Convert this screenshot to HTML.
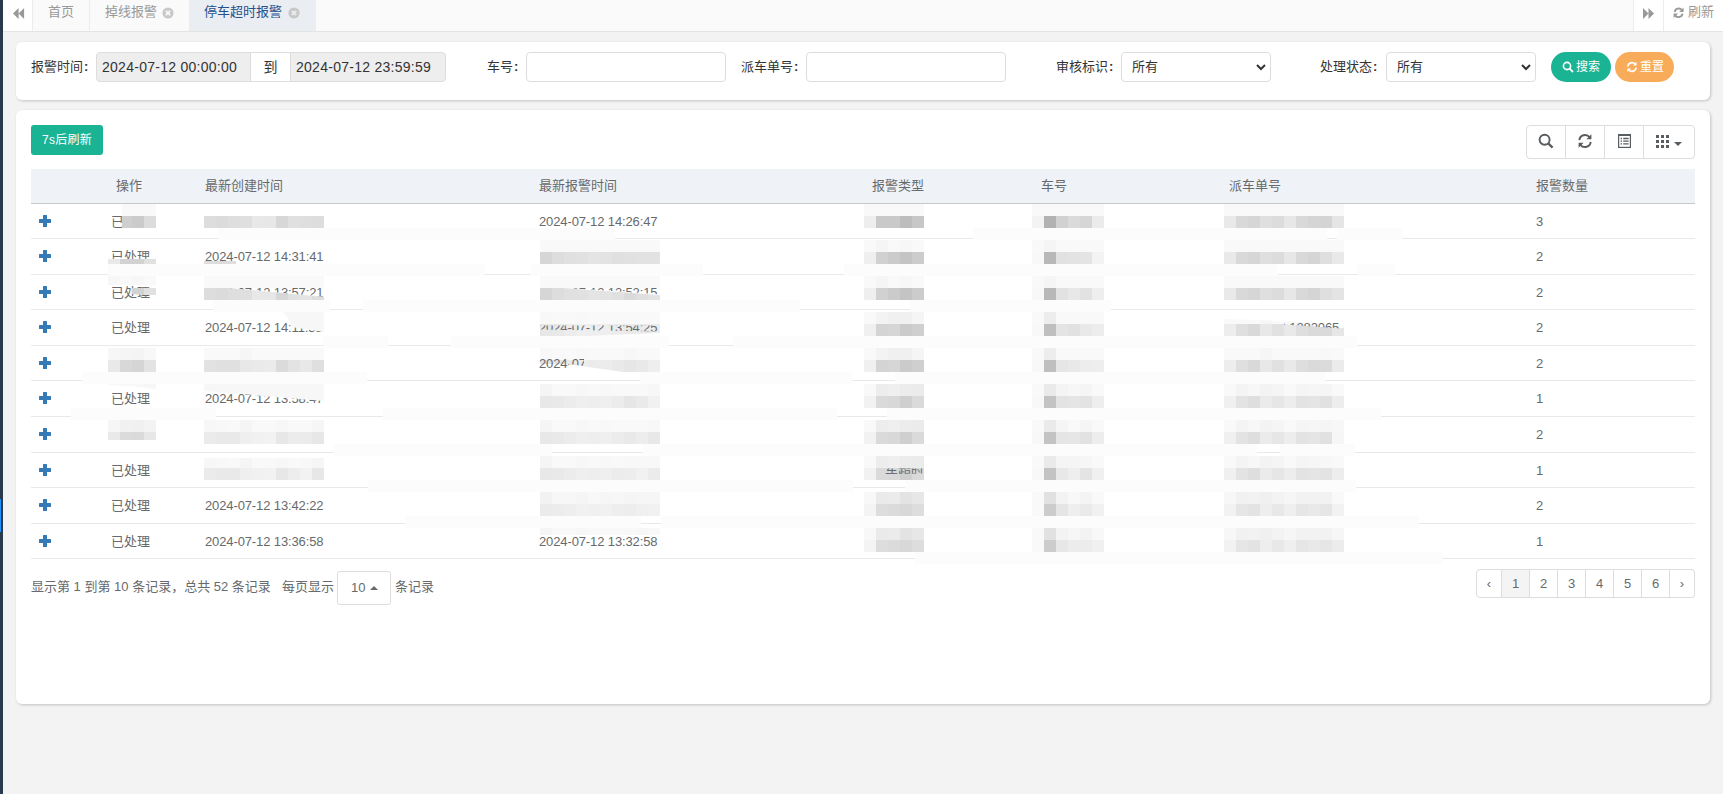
<!DOCTYPE html>
<html lang="zh-CN">
<head>
<meta charset="utf-8">
<title>停车超时报警</title>
<style>
*{box-sizing:border-box;}
html,body{margin:0;padding:0;}
body{width:1723px;height:794px;overflow:hidden;background:#f3f3f4;font-family:"Liberation Sans","Noto Sans CJK SC","WenQuanYi Zen Hei",sans-serif;font-size:13px;color:#676a6c;position:relative;}
.abs{position:absolute;}
#strip{left:0;top:0;width:3px;height:794px;background:#293a4b;}
#strip i{position:absolute;left:0;top:499px;width:1px;height:33px;background:#1e90ff;}
#tabs{left:3px;top:0;width:1720px;height:32px;background:#fafafa;border-bottom:1px solid #e4e4e4;}
#tabs .b{position:absolute;top:0;height:31px;line-height:24px;font-size:13px;color:#999;white-space:nowrap;}
#tabs .l{left:0;width:30px;background:#fff;border-right:1px solid #ececec;}
#tabs .t1{left:30px;width:57px;border-right:1px solid #ececec;text-align:center;}
#tabs .t2{left:87px;width:99px;padding-left:15px;}
#tabs .t3{left:186px;width:127px;padding-left:15px;background:#eaedf1;color:#23508e;}
#tabs .r1{left:1630px;width:30px;background:#fff;border-left:1px solid #ececec;}
#tabs .r2{left:1660px;width:60px;background:#fff;border-left:1px solid #ececec;padding-left:24px;}
.card{background:#fff;border-radius:6px;box-shadow:1px 1px 3px rgba(0,0,0,.2);}
#c1{left:16px;top:42px;width:1694px;height:58px;}
#c2{left:16px;top:110px;width:1694px;height:594px;}
.lab b{margin-left:1px;}
.cm{font-family:"Noto Sans CJK SC",sans-serif;}
.lab{position:absolute;top:52px;height:30px;line-height:29px;font-size:13px;color:#333;white-space:nowrap;}
.inp{position:absolute;top:52px;height:30px;border:1px solid #ddd;border-radius:4px;background:#fff;line-height:28px;font-size:14px;color:#333;white-space:nowrap;}
.dis{background:#eee;padding-left:5px;letter-spacing:.27px;}
.btn{position:absolute;top:52px;height:30px;border-radius:15px;color:#fff;font-size:12px;line-height:30px;white-space:nowrap;}
#th{left:31px;top:169px;width:1664px;height:35px;background:#eff3f8;border-bottom:1px solid #c8c8c8;}
.h{position:absolute;top:170px;height:33px;line-height:32px;font-size:13px;color:#676a6c;white-space:nowrap;}
.ln{position:absolute;height:1px;background:#e7eaec;}
.c{position:absolute;height:20px;line-height:20px;font-size:13px;color:#676a6c;white-space:nowrap;}
.plus{position:absolute;left:39px;width:12px;height:12px;}
.plus:before{content:"";position:absolute;left:0;top:4px;width:12px;height:4px;background:#337ab7;border-radius:.5px;}
.plus:after{content:"";position:absolute;left:4px;top:0;width:4px;height:12px;background:#337ab7;border-radius:.5px;}
.d{letter-spacing:-.12px;}
.sm{position:absolute;height:12px;background:#fcfcfc;}
.m{position:absolute;width:12px;height:12px;}
.tb{position:absolute;top:125px;height:34px;border:1px solid #ddd;background:#fff;border-left:0;}
.pg{position:absolute;top:569px;height:29px;border:1px solid #ddd;border-left:0;background:#fff;font-size:13px;line-height:27px;text-align:center;color:#676a6c;}
</style>
</head>
<body>
<div id="strip" class="abs"><i></i></div>
<div id="tabs" class="abs">
  <div class="b l"><svg width="30" height="31" viewBox="0 0 30 31"><path d="M10 13.5 L15.6 8 V19 Z M15.6 13.5 L21.1 8 V19 Z" fill="#999"/></svg></div>
  <div class="b t1">首页</div>
  <div class="b t2">掉线报警<svg class="abs" style="left:72px;top:7px" width="12" height="12" viewBox="0 0 12 12"><circle cx="6" cy="6" r="5.6" fill="#c8c8c8"/><path d="M3.8 3.8 L8.2 8.2 M8.2 3.8 L3.8 8.2" stroke="#fafafa" stroke-width="1.8"/></svg></div>
  <div class="b t3">停车超时报警<svg class="abs" style="left:99px;top:7px" width="12" height="12" viewBox="0 0 12 12"><circle cx="6" cy="6" r="5.6" fill="#c8c8c8"/><path d="M3.8 3.8 L8.2 8.2 M8.2 3.8 L3.8 8.2" stroke="#eaedf1" stroke-width="1.8"/></svg></div>
  <div class="b r1"><svg width="30" height="31" viewBox="0 0 30 31"><path d="M9 8 L14.5 13.5 L9 19 Z M14.5 8 L20 13.5 L14.5 19 Z" fill="#999"/></svg></div>
  <div class="b r2"><svg class="abs" style="left:8.7px;top:6.6px" width="11.2" height="11.6" viewBox="0 0 12 13"><path d="M1.6 5.6 A4.5 4.5 0 0 1 9.6 3.4 M10.4 7.4 A4.5 4.5 0 0 1 2.4 9.6" fill="none" stroke="#999" stroke-width="2.1"/><path d="M11.6 .6 V5.6 H6.6 Z M.4 12.4 V7.4 H5.4 Z" fill="#999"/></svg>刷新</div>
</div>
<div id="c1" class="abs card"></div>
<div id="c2" class="abs card"></div>
<div class="lab" style="left:31px">报警时间<b>:</b></div>
<div class="inp dis" style="left:96px;width:155px;border-radius:4px 0 0 4px">2024-07-12 00:00:00</div>
<div class="inp" style="left:250px;width:41px;border-radius:0;text-align:center">到</div>
<div class="inp dis" style="left:290px;width:156px;border-radius:0 4px 4px 0">2024-07-12 23:59:59</div>
<div class="lab" style="left:487px">车号<b>:</b></div>
<div class="inp" style="left:526px;width:200px"></div>
<div class="lab" style="left:741px">派车单号<b>:</b></div>
<div class="inp" style="left:806px;width:200px"></div>
<div class="lab" style="left:1056px">审核标识<b>:</b></div>
<div class="inp" style="left:1121px;width:150px;padding-left:10px;font-size:13px">所有<svg class="abs" style="right:4px;top:11px" width="10" height="7" viewBox="0 0 10 7"><path d="M1 1 L5 5 L9 1" fill="none" stroke="#333" stroke-width="2"/></svg></div>
<div class="lab" style="left:1320px">处理状态<b>:</b></div>
<div class="inp" style="left:1386px;width:150px;padding-left:10px;font-size:13px">所有<svg class="abs" style="right:4px;top:11px" width="10" height="7" viewBox="0 0 10 7"><path d="M1 1 L5 5 L9 1" fill="none" stroke="#333" stroke-width="2"/></svg></div>
<div class="btn" style="left:1551px;width:60px;background:#1ab394;padding-left:25px"><svg class="abs" style="left:11px;top:9px" width="12" height="12" viewBox="0 0 12 12"><circle cx="5" cy="5" r="3.6" fill="none" stroke="#fff" stroke-width="1.6"/><path d="M7.6 7.6 L11 11" stroke="#fff" stroke-width="1.8"/></svg>搜索</div>
<div class="btn" style="left:1615px;width:59px;background:#f8ac59;padding-left:25px"><svg class="abs" style="left:11px;top:9px" width="12" height="12" viewBox="0 0 13 13"><path d="M2 6 A4.5 4.5 0 0 1 10 3.5 M11 7 A4.5 4.5 0 0 1 3 9.5" fill="none" stroke="#fff" stroke-width="1.8"/><path d="M11.5 1 V5 H7.5 Z M1.5 12 V8 H5.5 Z" fill="#fff"/></svg>重置</div>
<div class="abs" style="left:31px;top:125px;width:72px;height:30px;background:#1ab394;border-radius:3px;color:#fff;font-size:12px;line-height:30px;text-align:center;letter-spacing:.3px">7s后刷新</div>
<div class="abs" style="left:1526px;top:125px;width:169px;height:34px;border:1px solid #ddd;border-radius:4px;background:#fff"></div>
<div class="abs" style="left:1565px;top:126px;width:1px;height:32px;background:#ddd"></div>
<div class="abs" style="left:1604px;top:126px;width:1px;height:32px;background:#ddd"></div>
<div class="abs" style="left:1643px;top:126px;width:1px;height:32px;background:#ddd"></div>
<svg class="abs" style="left:1537px;top:132px" width="18" height="18" viewBox="0 0 18 18"><circle cx="7.6" cy="7.7" r="5" fill="none" stroke="#5a5d5f" stroke-width="1.9"/><path d="M11.2 11.4 L15.6 15.6" stroke="#5a5d5f" stroke-width="2.3"/></svg>
<svg class="abs" style="left:1577px;top:133px" width="16" height="16" viewBox="0 0 16 16"><path d="M2.3 7.2 A5.8 5.8 0 0 1 12.6 4.2 M13.7 8.8 A5.8 5.8 0 0 1 3.4 11.8" fill="none" stroke="#5a5d5f" stroke-width="1.9"/><path d="M14.4 1.2 V6.2 H9.4 Z M1.6 14.8 V9.8 H6.6 Z" fill="#5a5d5f"/></svg>
<svg class="abs" style="left:1618px;top:134px" width="13" height="14" viewBox="0 0 13 14"><rect x=".6" y=".6" width="11.8" height="12.8" fill="none" stroke="#5a5d5f" stroke-width="1.2"/><path d="M0 1 H13" stroke="#5a5d5f" stroke-width="2"/><path d="M2.6 4.5 H4 M5.2 4.5 H10.6 M2.6 7.2 H4 M5.2 7.2 H10.6 M2.6 9.9 H4 M5.2 9.9 H10.6" stroke="#5a5d5f" stroke-width="1.3"/></svg>
<svg class="abs" style="left:1656px;top:135px" width="13" height="13" viewBox="0 0 13 13"><path d="M0 0h3v3H0z M5 0h3v3H5z M10 0h3v3h-3z M0 5h3v3H0z M5 5h3v3H5z M10 5h3v3h-3z M0 10h3v3H0z M5 10h3v3H5z M10 10h3v3h-3z" fill="#5a5d5f"/></svg>
<svg class="abs" style="left:1674px;top:142px" width="8" height="4" viewBox="0 0 8 4"><path d="M0 0H8L4 4Z" fill="#5a5d5f"/></svg>
<div id="th" class="abs"></div>
<div class="h" style="left:116px">操作</div>
<div class="h" style="left:205px">最新创建时间</div>
<div class="h" style="left:539px">最新报警时间</div>
<div class="h" style="left:872px">报警类型</div>
<div class="h" style="left:1041px">车号</div>
<div class="h" style="left:1229px">派车单号</div>
<div class="h" style="left:1536px">报警数量</div>
<div class="ln" style="left:31px;top:238px;width:187px"></div>
<div class="ln" style="left:615px;top:238px;width:358px"></div>
<div class="ln" style="left:1327px;top:238px;width:10px"></div>
<div class="ln" style="left:1402px;top:238px;width:293px"></div>
<div class="sm" style="left:218px;top:228px;width:397px"></div>
<div class="sm" style="left:973px;top:228px;width:354px"></div>
<div class="sm" style="left:1337px;top:228px;width:65px"></div>
<div class="ln" style="left:31px;top:274px;width:77px"></div>
<div class="ln" style="left:485px;top:274px;width:45px"></div>
<div class="ln" style="left:703px;top:274px;width:141px"></div>
<div class="ln" style="left:1278px;top:274px;width:80px"></div>
<div class="ln" style="left:1395px;top:274px;width:300px"></div>
<div class="sm" style="left:108px;top:264px;width:377px"></div>
<div class="sm" style="left:530px;top:264px;width:173px"></div>
<div class="sm" style="left:844px;top:264px;width:434px"></div>
<div class="sm" style="left:1358px;top:264px;width:37px"></div>
<div class="ln" style="left:31px;top:309px;width:182px"></div>
<div class="ln" style="left:330px;top:309px;width:33px"></div>
<div class="ln" style="left:800px;top:309px;width:110px"></div>
<div class="ln" style="left:1111px;top:309px;width:584px"></div>
<div class="sm" style="left:213px;top:300px;width:117px"></div>
<div class="sm" style="left:363px;top:300px;width:437px"></div>
<div class="sm" style="left:910px;top:300px;width:201px"></div>
<div class="ln" style="left:31px;top:345px;width:292px"></div>
<div class="ln" style="left:388px;top:345px;width:62px"></div>
<div class="ln" style="left:669px;top:345px;width:65px"></div>
<div class="ln" style="left:1358px;top:345px;width:337px"></div>
<div class="sm" style="left:323px;top:336px;width:65px"></div>
<div class="sm" style="left:450px;top:336px;width:219px"></div>
<div class="sm" style="left:734px;top:336px;width:624px"></div>
<div class="ln" style="left:31px;top:380px;width:51px"></div>
<div class="ln" style="left:367px;top:380px;width:273px"></div>
<div class="ln" style="left:852px;top:380px;width:43px"></div>
<div class="ln" style="left:1325px;top:380px;width:370px"></div>
<div class="sm" style="left:82px;top:372px;width:285px"></div>
<div class="sm" style="left:640px;top:372px;width:212px"></div>
<div class="sm" style="left:895px;top:372px;width:430px"></div>
<div class="ln" style="left:31px;top:416px;width:40px"></div>
<div class="ln" style="left:216px;top:416px;width:167px"></div>
<div class="ln" style="left:837px;top:416px;width:50px"></div>
<div class="ln" style="left:1381px;top:416px;width:314px"></div>
<div class="sm" style="left:71px;top:408px;width:145px"></div>
<div class="sm" style="left:383px;top:408px;width:454px"></div>
<div class="sm" style="left:887px;top:408px;width:494px"></div>
<div class="ln" style="left:31px;top:452px;width:303px"></div>
<div class="ln" style="left:552px;top:452px;width:91px"></div>
<div class="ln" style="left:1257px;top:452px;width:23px"></div>
<div class="ln" style="left:1355px;top:452px;width:340px"></div>
<div class="sm" style="left:334px;top:444px;width:218px"></div>
<div class="sm" style="left:643px;top:444px;width:614px"></div>
<div class="sm" style="left:1280px;top:444px;width:75px"></div>
<div class="ln" style="left:31px;top:487px;width:337px"></div>
<div class="ln" style="left:853px;top:487px;width:52px"></div>
<div class="ln" style="left:1356px;top:487px;width:339px"></div>
<div class="sm" style="left:368px;top:480px;width:485px"></div>
<div class="sm" style="left:905px;top:480px;width:451px"></div>
<div class="ln" style="left:31px;top:523px;width:374px"></div>
<div class="ln" style="left:641px;top:523px;width:20px"></div>
<div class="ln" style="left:1419px;top:523px;width:276px"></div>
<div class="sm" style="left:405px;top:516px;width:236px"></div>
<div class="sm" style="left:661px;top:516px;width:758px"></div>
<div class="ln" style="left:31px;top:558px;width:884px"></div>
<div class="ln" style="left:1442px;top:558px;width:253px"></div>
<div class="sm" style="left:915px;top:552px;width:527px"></div>
<div class="plus" style="top:215px"></div>
<div class="c d" style="left:1536px;top:212px">3</div>
<div class="plus" style="top:250px"></div>
<div class="c d" style="left:1536px;top:247px">2</div>
<div class="plus" style="top:286px"></div>
<div class="c d" style="left:1536px;top:283px">2</div>
<div class="plus" style="top:321px"></div>
<div class="c d" style="left:1536px;top:318px">2</div>
<div class="plus" style="top:357px"></div>
<div class="c d" style="left:1536px;top:354px">2</div>
<div class="plus" style="top:392px"></div>
<div class="c d" style="left:1536px;top:389px">1</div>
<div class="plus" style="top:428px"></div>
<div class="c d" style="left:1536px;top:425px">2</div>
<div class="plus" style="top:464px"></div>
<div class="c d" style="left:1536px;top:461px">1</div>
<div class="plus" style="top:499px"></div>
<div class="c d" style="left:1536px;top:496px">2</div>
<div class="plus" style="top:535px"></div>
<div class="c d" style="left:1536px;top:532px">1</div>
<div class="c" style="left:111px;top:247px">已处理</div>
<div class="c" style="left:111px;top:318px">已处理</div>
<div class="c" style="left:111px;top:389px">已处理</div>
<div class="c" style="left:111px;top:461px">已处理</div>
<div class="c" style="left:111px;top:496px">已处理</div>
<div class="c" style="left:111px;top:532px">已处理</div>
<div class="c" style="left:111px;top:212px">已</div>
<div class="c" style="left:111px;top:283px">已处理</div>
<div class="c d" style="left:205px;top:247px">2024-07-12 14:31:41</div>
<div class="c d" style="left:205px;top:318px">2024-07-12 14:11:35</div>
<div class="c d" style="left:205px;top:389px">2024-07-12 13:58:47</div>
<div class="c d" style="left:205px;top:496px">2024-07-12 13:42:22</div>
<div class="c d" style="left:205px;top:532px">2024-07-12 13:36:58</div>
<div class="c d" style="left:539px;top:212px">2024-07-12 14:26:47</div>
<div class="c d" style="left:539px;top:532px">2024-07-12 13:32:58</div>
<div class="m" style="left:864px;top:204px;width:60px;height:12px;background:linear-gradient(90deg,#f9f9f9 0px 12px,#f9f9f9 12px 24px,#f9f9f9 24px 36px,#f9f9f9 36px 48px,#f9f9f9 48px 60px)"></div>
<div class="m" style="left:864px;top:216px;width:60px;height:12px;background:linear-gradient(90deg,#eeeeee 0px 12px,#c9c9c9 12px 24px,#c9c9c9 24px 36px,#bdbdbd 36px 48px,#c7c7c7 48px 60px)"></div>
<div class="m" style="left:1032px;top:204px;width:72px;height:12px;background:linear-gradient(90deg,#f9f9f9 0px 12px,#f9f9f9 12px 24px,#f9f9f9 24px 36px,#f9f9f9 36px 48px,#f9f9f9 48px 60px,#f9f9f9 60px 72px)"></div>
<div class="m" style="left:1032px;top:216px;width:72px;height:12px;background:linear-gradient(90deg,#f3f3f3 0px 12px,#b2b2b2 12px 24px,#d1d1d1 24px 36px,#dadada 36px 48px,#d6d6d6 48px 60px,#ebebeb 60px 72px)"></div>
<div class="m" style="left:1224px;top:204px;width:120px;height:12px;background:linear-gradient(90deg,#f9f9f9 0px 12px,#f9f9f9 12px 24px,#f9f9f9 24px 36px,#f9f9f9 36px 48px,#f9f9f9 48px 60px,#f9f9f9 60px 72px,#f9f9f9 72px 84px,#f9f9f9 84px 96px,#f9f9f9 96px 108px,#f9f9f9 108px 120px)"></div>
<div class="m" style="left:1224px;top:216px;width:120px;height:12px;background:linear-gradient(90deg,#e9e9e9 0px 12px,#d9d9d9 12px 24px,#d6d6d6 24px 36px,#dfdfdf 36px 48px,#dcdcdc 48px 60px,#e7e7e7 60px 72px,#d9d9d9 72px 84px,#d5d5d5 84px 96px,#d4d4d4 96px 108px,#e5e5e5 108px 120px)"></div>
<div class="m" style="left:864px;top:240px;width:60px;height:12px;background:linear-gradient(90deg,#f9f9f9 0px 12px,#f5f5f5 12px 24px,#f9f9f9 24px 36px,#f7f7f7 36px 48px,#f9f9f9 48px 60px)"></div>
<div class="m" style="left:864px;top:252px;width:60px;height:12px;background:linear-gradient(90deg,#efefef 0px 12px,#d1d1d1 12px 24px,#cbcbcb 24px 36px,#c4c4c4 36px 48px,#cccccc 48px 60px)"></div>
<div class="m" style="left:1032px;top:240px;width:72px;height:12px;background:linear-gradient(90deg,#f9f9f9 0px 12px,#f5f5f5 12px 24px,#f9f9f9 24px 36px,#f9f9f9 36px 48px,#f9f9f9 48px 60px,#f9f9f9 60px 72px)"></div>
<div class="m" style="left:1032px;top:252px;width:72px;height:12px;background:linear-gradient(90deg,#f8f8f8 0px 12px,#b8b8b8 12px 24px,#e1e1e1 24px 36px,#e3e3e3 36px 48px,#e4e4e4 48px 60px,#f3f3f3 60px 72px)"></div>
<div class="m" style="left:1224px;top:240px;width:120px;height:12px;background:linear-gradient(90deg,#f9f9f9 0px 12px,#f9f9f9 12px 24px,#f9f9f9 24px 36px,#f9f9f9 36px 48px,#f9f9f9 48px 60px,#f9f9f9 60px 72px,#f9f9f9 72px 84px,#f9f9f9 84px 96px,#f9f9f9 96px 108px,#f9f9f9 108px 120px)"></div>
<div class="m" style="left:1224px;top:252px;width:120px;height:12px;background:linear-gradient(90deg,#e9e9e9 0px 12px,#d9d9d9 12px 24px,#d6d6d6 24px 36px,#dfdfdf 36px 48px,#dcdcdc 48px 60px,#e7e7e7 60px 72px,#d9d9d9 72px 84px,#d5d5d5 84px 96px,#dfdfdf 96px 108px,#e9e9e9 108px 120px)"></div>
<div class="m" style="left:864px;top:276px;width:60px;height:12px;background:linear-gradient(90deg,#f9f9f9 0px 12px,#f5f5f5 12px 24px,#f9f9f9 24px 36px,#f7f7f7 36px 48px,#f9f9f9 48px 60px)"></div>
<div class="m" style="left:864px;top:288px;width:60px;height:12px;background:linear-gradient(90deg,#efefef 0px 12px,#d1d1d1 12px 24px,#cbcbcb 24px 36px,#c4c4c4 36px 48px,#cccccc 48px 60px)"></div>
<div class="m" style="left:1032px;top:276px;width:72px;height:12px;background:linear-gradient(90deg,#f9f9f9 0px 12px,#f5f5f5 12px 24px,#f9f9f9 24px 36px,#f9f9f9 36px 48px,#f9f9f9 48px 60px,#f9f9f9 60px 72px)"></div>
<div class="m" style="left:1032px;top:288px;width:72px;height:12px;background:linear-gradient(90deg,#f8f8f8 0px 12px,#b8b8b8 12px 24px,#e2e2e2 24px 36px,#e8e8e8 36px 48px,#e2e2e2 48px 60px,#eeeeee 60px 72px)"></div>
<div class="m" style="left:1224px;top:276px;width:120px;height:12px;background:linear-gradient(90deg,#f9f9f9 0px 12px,#f9f9f9 12px 24px,#f9f9f9 24px 36px,#f9f9f9 36px 48px,#f9f9f9 48px 60px,#f9f9f9 60px 72px,#f9f9f9 72px 84px,#f9f9f9 84px 96px,#f9f9f9 96px 108px,#f9f9f9 108px 120px)"></div>
<div class="m" style="left:1224px;top:288px;width:120px;height:12px;background:linear-gradient(90deg,#e9e9e9 0px 12px,#d9d9d9 12px 24px,#d6d6d6 24px 36px,#dfdfdf 36px 48px,#dcdcdc 48px 60px,#e7e7e7 60px 72px,#d9d9d9 72px 84px,#d5d5d5 84px 96px,#dfdfdf 96px 108px,#e4e4e4 108px 120px)"></div>
<div class="m" style="left:864px;top:312px;width:60px;height:12px;background:linear-gradient(90deg,#f9f9f9 0px 12px,#f3f3f3 12px 24px,#f0f0f0 24px 36px,#f0f0f0 36px 48px,#f5f5f5 48px 60px)"></div>
<div class="m" style="left:864px;top:324px;width:60px;height:12px;background:linear-gradient(90deg,#f0f0f0 0px 12px,#d4d4d4 12px 24px,#d6d6d6 24px 36px,#cbcbcb 36px 48px,#cfcfcf 48px 60px)"></div>
<div class="m" style="left:1032px;top:312px;width:72px;height:12px;background:linear-gradient(90deg,#f9f9f9 0px 12px,#ededed 12px 24px,#f9f9f9 24px 36px,#f9f9f9 36px 48px,#f9f9f9 48px 60px,#f9f9f9 60px 72px)"></div>
<div class="m" style="left:1032px;top:324px;width:72px;height:12px;background:linear-gradient(90deg,#f8f8f8 0px 12px,#bfbfbf 12px 24px,#e4e4e4 24px 36px,#e1e1e1 36px 48px,#e9e9e9 48px 60px,#ededed 60px 72px)"></div>
<div class="m" style="left:1224px;top:319px;width:120px;height:5px;background:linear-gradient(90deg,#f9f9f9 0px 12px,#f9f9f9 12px 24px,#f9f9f9 24px 36px,#f6f6f6 36px 48px,#f9f9f9 48px 60px,#f9f9f9 60px 72px,#f9f9f9 72px 84px,#f9f9f9 84px 96px,#f9f9f9 96px 108px,#f9f9f9 108px 120px);clip-path:polygon(0.0px 0.0px,66.0px 2.0px,120.0px 5.0px,0.0px 5.0px)"></div>
<div class="m" style="left:1224px;top:324px;width:120px;height:12px;background:linear-gradient(90deg,#ededed 0px 12px,#dfdfdf 12px 24px,#d9d9d9 24px 36px,#e8e8e8 36px 48px,#e1e1e1 48px 60px,#e9e9e9 60px 72px,#dedede 72px 84px,#dadada 84px 96px,#dadada 96px 108px,#e6e6e6 108px 120px);clip-path:polygon(0.0px 0.0px,60.0px 0.0px,112.0px 4.0px,120.0px 4.0px,120.0px 12.0px,0.0px 12.0px)"></div>
<div class="m" style="left:864px;top:348px;width:60px;height:12px;background:linear-gradient(90deg,#f9f9f9 0px 12px,#f3f3f3 12px 24px,#f0f0f0 24px 36px,#f0f0f0 36px 48px,#f5f5f5 48px 60px)"></div>
<div class="m" style="left:864px;top:360px;width:60px;height:12px;background:linear-gradient(90deg,#f0f0f0 0px 12px,#d4d4d4 12px 24px,#d6d6d6 24px 36px,#cbcbcb 36px 48px,#cfcfcf 48px 60px)"></div>
<div class="m" style="left:1032px;top:348px;width:72px;height:12px;background:linear-gradient(90deg,#f9f9f9 0px 12px,#ededed 12px 24px,#f9f9f9 24px 36px,#f9f9f9 36px 48px,#f9f9f9 48px 60px,#f9f9f9 60px 72px)"></div>
<div class="m" style="left:1032px;top:360px;width:72px;height:12px;background:linear-gradient(90deg,#f8f8f8 0px 12px,#bfbfbf 12px 24px,#e6e6e6 24px 36px,#e9e9e9 36px 48px,#ededed 48px 60px,#eeeeee 60px 72px)"></div>
<div class="m" style="left:1224px;top:348px;width:120px;height:12px;background:linear-gradient(90deg,#f9f9f9 0px 12px,#f9f9f9 12px 24px,#f9f9f9 24px 36px,#f6f6f6 36px 48px,#f9f9f9 48px 60px,#f9f9f9 60px 72px,#f9f9f9 72px 84px,#f9f9f9 84px 96px,#f8f8f8 96px 108px,#f9f9f9 108px 120px)"></div>
<div class="m" style="left:1224px;top:360px;width:120px;height:12px;background:linear-gradient(90deg,#ededed 0px 12px,#dfdfdf 12px 24px,#d9d9d9 24px 36px,#e8e8e8 36px 48px,#e1e1e1 48px 60px,#e9e9e9 60px 72px,#dedede 72px 84px,#dadada 84px 96px,#dbdbdb 96px 108px,#ebebeb 108px 120px)"></div>
<div class="m" style="left:864px;top:384px;width:60px;height:12px;background:linear-gradient(90deg,#f9f9f9 0px 12px,#ededed 12px 24px,#efefef 24px 36px,#ececec 36px 48px,#ebebeb 48px 60px)"></div>
<div class="m" style="left:864px;top:396px;width:60px;height:12px;background:linear-gradient(90deg,#f2f2f2 0px 12px,#dadada 12px 24px,#d8d8d8 24px 36px,#cfcfcf 36px 48px,#dadada 48px 60px)"></div>
<div class="m" style="left:1032px;top:384px;width:72px;height:12px;background:linear-gradient(90deg,#f9f9f9 0px 12px,#eaeaea 12px 24px,#f4f4f4 24px 36px,#f7f7f7 36px 48px,#f5f5f5 48px 60px,#f9f9f9 60px 72px)"></div>
<div class="m" style="left:1032px;top:396px;width:72px;height:12px;background:linear-gradient(90deg,#f8f8f8 0px 12px,#c3c3c3 12px 24px,#e3e3e3 24px 36px,#e5e5e5 36px 48px,#e3e3e3 48px 60px,#eeeeee 60px 72px)"></div>
<div class="m" style="left:1224px;top:384px;width:120px;height:12px;background:linear-gradient(90deg,#f9f9f9 0px 12px,#f4f4f4 12px 24px,#f7f7f7 24px 36px,#f3f3f3 36px 48px,#f5f5f5 48px 60px,#f9f9f9 60px 72px,#f5f5f5 72px 84px,#f6f6f6 84px 96px,#f5f5f5 96px 108px,#f9f9f9 108px 120px)"></div>
<div class="m" style="left:1224px;top:396px;width:120px;height:12px;background:linear-gradient(90deg,#f0f0f0 0px 12px,#e3e3e3 12px 24px,#dedede 24px 36px,#ebebeb 36px 48px,#e6e6e6 48px 60px,#ededed 60px 72px,#e3e3e3 72px 84px,#e5e5e5 84px 96px,#e1e1e1 96px 108px,#ededed 108px 120px)"></div>
<div class="m" style="left:864px;top:420px;width:60px;height:12px;background:linear-gradient(90deg,#f9f9f9 0px 12px,#ededed 12px 24px,#efefef 24px 36px,#ececec 36px 48px,#ebebeb 48px 60px)"></div>
<div class="m" style="left:864px;top:432px;width:60px;height:12px;background:linear-gradient(90deg,#f2f2f2 0px 12px,#dadada 12px 24px,#d8d8d8 24px 36px,#cfcfcf 36px 48px,#dadada 48px 60px)"></div>
<div class="m" style="left:1032px;top:420px;width:72px;height:12px;background:linear-gradient(90deg,#f9f9f9 0px 12px,#eaeaea 12px 24px,#f5f5f5 24px 36px,#f9f9f9 36px 48px,#f5f5f5 48px 60px,#f9f9f9 60px 72px)"></div>
<div class="m" style="left:1032px;top:432px;width:72px;height:12px;background:linear-gradient(90deg,#f8f8f8 0px 12px,#c3c3c3 12px 24px,#e5e5e5 24px 36px,#e6e6e6 36px 48px,#e2e2e2 48px 60px,#ededed 60px 72px)"></div>
<div class="m" style="left:1224px;top:420px;width:120px;height:12px;background:linear-gradient(90deg,#f9f9f9 0px 12px,#f4f4f4 12px 24px,#f7f7f7 24px 36px,#f3f3f3 36px 48px,#f5f5f5 48px 60px,#f9f9f9 60px 72px,#f5f5f5 72px 84px,#f6f6f6 84px 96px,#f5f5f5 96px 108px,#f7f7f7 108px 120px)"></div>
<div class="m" style="left:1224px;top:432px;width:120px;height:12px;background:linear-gradient(90deg,#f0f0f0 0px 12px,#e3e3e3 12px 24px,#dedede 24px 36px,#ebebeb 36px 48px,#e6e6e6 48px 60px,#ededed 60px 72px,#e3e3e3 72px 84px,#e5e5e5 84px 96px,#e1e1e1 96px 108px,#f6f6f6 108px 120px)"></div>
<div class="m" style="left:864px;top:456px;width:60px;height:12px;background:linear-gradient(90deg,#f9f9f9 0px 12px,#ededed 12px 24px,#efefef 24px 36px,#ececec 36px 48px,#ebebeb 48px 60px)"></div>
<div class="m" style="left:864px;top:468px;width:60px;height:12px;background:linear-gradient(90deg,#f2f2f2 0px 12px,#dadada 12px 24px,#d8d8d8 24px 36px,#cfcfcf 36px 48px,#dadada 48px 60px)"></div>
<div class="m" style="left:1032px;top:456px;width:72px;height:12px;background:linear-gradient(90deg,#f9f9f9 0px 12px,#eaeaea 12px 24px,#f5f5f5 24px 36px,#f5f5f5 36px 48px,#f6f6f6 48px 60px,#f9f9f9 60px 72px)"></div>
<div class="m" style="left:1032px;top:468px;width:72px;height:12px;background:linear-gradient(90deg,#f8f8f8 0px 12px,#c3c3c3 12px 24px,#e8e8e8 24px 36px,#eeeeee 36px 48px,#e4e4e4 48px 60px,#f0f0f0 60px 72px)"></div>
<div class="m" style="left:1224px;top:456px;width:120px;height:12px;background:linear-gradient(90deg,#f9f9f9 0px 12px,#f4f4f4 12px 24px,#f7f7f7 24px 36px,#f3f3f3 36px 48px,#f5f5f5 48px 60px,#f9f9f9 60px 72px,#f5f5f5 72px 84px,#f6f6f6 84px 96px,#f7f7f7 96px 108px,#f9f9f9 108px 120px)"></div>
<div class="m" style="left:1224px;top:468px;width:120px;height:12px;background:linear-gradient(90deg,#f0f0f0 0px 12px,#e3e3e3 12px 24px,#dedede 24px 36px,#ebebeb 36px 48px,#e6e6e6 48px 60px,#ededed 60px 72px,#e3e3e3 72px 84px,#e5e5e5 84px 96px,#e3e3e3 96px 108px,#ededed 108px 120px)"></div>
<div class="m" style="left:864px;top:492px;width:60px;height:12px;background:linear-gradient(90deg,#f8f8f8 0px 12px,#eaeaea 12px 24px,#ebebeb 24px 36px,#e3e3e3 36px 48px,#e7e7e7 48px 60px)"></div>
<div class="m" style="left:864px;top:504px;width:60px;height:12px;background:linear-gradient(90deg,#f4f4f4 0px 12px,#dddddd 12px 24px,#dbdbdb 24px 36px,#d8d8d8 36px 48px,#dddddd 48px 60px)"></div>
<div class="m" style="left:1032px;top:492px;width:72px;height:12px;background:linear-gradient(90deg,#f9f9f9 0px 12px,#e1e1e1 12px 24px,#f3f3f3 24px 36px,#f8f8f8 36px 48px,#f4f4f4 48px 60px,#f9f9f9 60px 72px)"></div>
<div class="m" style="left:1032px;top:504px;width:72px;height:12px;background:linear-gradient(90deg,#f9f9f9 0px 12px,#cccccc 12px 24px,#e5e5e5 24px 36px,#eeeeee 36px 48px,#eaeaea 48px 60px,#f1f1f1 60px 72px)"></div>
<div class="m" style="left:1224px;top:492px;width:120px;height:12px;background:linear-gradient(90deg,#f7f7f7 0px 12px,#f1f1f1 12px 24px,#f2f2f2 24px 36px,#f0f0f0 36px 48px,#f3f3f3 48px 60px,#f6f6f6 60px 72px,#f2f2f2 72px 84px,#f2f2f2 84px 96px,#f2f2f2 96px 108px,#f9f9f9 108px 120px)"></div>
<div class="m" style="left:1224px;top:504px;width:120px;height:12px;background:linear-gradient(90deg,#f2f2f2 0px 12px,#e6e6e6 12px 24px,#e3e3e3 24px 36px,#eeeeee 36px 48px,#e8e8e8 48px 60px,#efefef 60px 72px,#e6e6e6 72px 84px,#e9e9e9 84px 96px,#e6e6e6 96px 108px,#f2f2f2 108px 120px)"></div>
<div class="m" style="left:864px;top:528px;width:60px;height:12px;background:linear-gradient(90deg,#f8f8f8 0px 12px,#eaeaea 12px 24px,#ebebeb 24px 36px,#e3e3e3 36px 48px,#e7e7e7 48px 60px)"></div>
<div class="m" style="left:864px;top:540px;width:60px;height:12px;background:linear-gradient(90deg,#f4f4f4 0px 12px,#dddddd 12px 24px,#dbdbdb 24px 36px,#d8d8d8 36px 48px,#dddddd 48px 60px)"></div>
<div class="m" style="left:1032px;top:528px;width:72px;height:12px;background:linear-gradient(90deg,#f9f9f9 0px 12px,#e1e1e1 12px 24px,#f3f3f3 24px 36px,#f6f6f6 36px 48px,#f3f3f3 48px 60px,#f8f8f8 60px 72px)"></div>
<div class="m" style="left:1032px;top:540px;width:72px;height:12px;background:linear-gradient(90deg,#f9f9f9 0px 12px,#cccccc 12px 24px,#e7e7e7 24px 36px,#ececec 36px 48px,#ececec 48px 60px,#f0f0f0 60px 72px)"></div>
<div class="m" style="left:1224px;top:528px;width:120px;height:12px;background:linear-gradient(90deg,#f7f7f7 0px 12px,#f1f1f1 12px 24px,#f2f2f2 24px 36px,#f0f0f0 36px 48px,#f3f3f3 48px 60px,#f6f6f6 60px 72px,#f2f2f2 72px 84px,#f2f2f2 84px 96px,#f2f2f2 96px 108px,#f6f6f6 108px 120px)"></div>
<div class="m" style="left:1224px;top:540px;width:120px;height:12px;background:linear-gradient(90deg,#f2f2f2 0px 12px,#e6e6e6 12px 24px,#e3e3e3 24px 36px,#eeeeee 36px 48px,#e8e8e8 48px 60px,#efefef 60px 72px,#e6e6e6 72px 84px,#e9e9e9 84px 96px,#e6e6e6 96px 108px,#ececec 108px 120px)"></div>
<div class="m" style="left:540px;top:240px;width:120px;height:12px;background:linear-gradient(90deg,#f9f9f9 0px 12px,#f9f9f9 12px 24px,#f9f9f9 24px 36px,#f9f9f9 36px 48px,#f9f9f9 48px 60px,#f9f9f9 60px 72px,#f9f9f9 72px 84px,#f9f9f9 84px 96px,#f9f9f9 96px 108px,#f9f9f9 108px 120px)"></div>
<div class="m" style="left:540px;top:252px;width:120px;height:12px;background:linear-gradient(90deg,#d6d6d6 0px 12px,#dddddd 12px 24px,#e0e0e0 24px 36px,#e1e1e1 36px 48px,#e4e4e4 48px 60px,#e3e3e3 60px 72px,#e0e0e0 72px 84px,#e1e1e1 84px 96px,#e2e2e2 96px 108px,#e2e2e2 108px 120px)"></div>
<div class="m" style="left:540px;top:384px;width:120px;height:12px;background:linear-gradient(90deg,#f5f5f5 0px 12px,#f9f9f9 12px 24px,#f9f9f9 24px 36px,#f7f7f7 36px 48px,#f9f9f9 48px 60px,#f8f8f8 60px 72px,#f9f9f9 72px 84px,#f9f9f9 84px 96px,#f9f9f9 96px 108px,#f7f7f7 108px 120px)"></div>
<div class="m" style="left:540px;top:396px;width:120px;height:12px;background:linear-gradient(90deg,#e8e8e8 0px 12px,#e9e9e9 12px 24px,#ececec 24px 36px,#efefef 36px 48px,#eeeeee 48px 60px,#efefef 60px 72px,#ececec 72px 84px,#e6e6e6 84px 96px,#eaeaea 96px 108px,#f1f1f1 108px 120px)"></div>
<div class="m" style="left:540px;top:420px;width:120px;height:12px;background:linear-gradient(90deg,#f5f5f5 0px 12px,#f9f9f9 12px 24px,#f9f9f9 24px 36px,#f7f7f7 36px 48px,#f9f9f9 48px 60px,#f8f8f8 60px 72px,#f9f9f9 72px 84px,#f9f9f9 84px 96px,#f9f9f9 96px 108px,#f8f8f8 108px 120px)"></div>
<div class="m" style="left:540px;top:432px;width:120px;height:12px;background:linear-gradient(90deg,#e8e8e8 0px 12px,#e9e9e9 12px 24px,#ececec 24px 36px,#efefef 36px 48px,#eeeeee 48px 60px,#efefef 60px 72px,#ececec 72px 84px,#e9e9e9 84px 96px,#ededed 96px 108px,#e8e8e8 108px 120px)"></div>
<div class="m" style="left:540px;top:456px;width:120px;height:12px;background:linear-gradient(90deg,#f5f5f5 0px 12px,#f9f9f9 12px 24px,#f9f9f9 24px 36px,#f7f7f7 36px 48px,#f9f9f9 48px 60px,#f8f8f8 60px 72px,#f9f9f9 72px 84px,#f8f8f8 84px 96px,#f8f8f8 96px 108px,#f8f8f8 108px 120px)"></div>
<div class="m" style="left:540px;top:468px;width:120px;height:12px;background:linear-gradient(90deg,#e8e8e8 0px 12px,#e9e9e9 12px 24px,#ececec 24px 36px,#efefef 36px 48px,#eeeeee 48px 60px,#efefef 60px 72px,#ececec 72px 84px,#ededed 84px 96px,#f1f1f1 96px 108px,#ebebeb 108px 120px)"></div>
<div class="m" style="left:540px;top:492px;width:120px;height:12px;background:linear-gradient(90deg,#f2f2f2 0px 12px,#f7f7f7 12px 24px,#f7f7f7 24px 36px,#f5f5f5 36px 48px,#f8f8f8 48px 60px,#f6f6f6 60px 72px,#f7f7f7 72px 84px,#f5f5f5 84px 96px,#f6f6f6 96px 108px,#f6f6f6 108px 120px)"></div>
<div class="m" style="left:540px;top:504px;width:120px;height:12px;background:linear-gradient(90deg,#ebebeb 0px 12px,#ececec 12px 24px,#eeeeee 24px 36px,#f1f1f1 36px 48px,#f0f0f0 48px 60px,#f1f1f1 60px 72px,#eeeeee 72px 84px,#ededed 84px 96px,#f0f0f0 96px 108px,#f1f1f1 108px 120px)"></div>
<div class="m" style="left:540px;top:276px;width:120px;height:12px;background:linear-gradient(90deg,#f9f9f9 0px 12px,#f9f9f9 12px 24px,#f9f9f9 24px 36px,#f9f9f9 36px 48px,#f9f9f9 48px 60px,#f9f9f9 60px 72px,#f9f9f9 72px 84px,#f9f9f9 84px 96px,#f9f9f9 96px 108px,#f9f9f9 108px 120px)"></div>
<div class="m" style="left:540px;top:288px;width:120px;height:12px;background:linear-gradient(90deg,#d6d6d6 0px 12px,#dddddd 12px 24px,#e0e0e0 24px 36px,#e1e1e1 36px 48px,#e4e4e4 48px 60px,#e3e3e3 60px 72px,#e0e0e0 72px 84px,#dadada 84px 96px,#dfdfdf 96px 108px,#e3e3e3 108px 120px);clip-path:polygon(0.0px 0.0px,23.0px 0.0px,120.0px 7.0px,120.0px 12.0px,0.0px 12.0px)"></div>
<div class="m" style="left:540px;top:312px;width:120px;height:12px;background:linear-gradient(90deg,#f8f8f8 0px 12px,#f9f9f9 12px 24px,#f9f9f9 24px 36px,#f8f8f8 36px 48px,#f9f9f9 48px 60px,#f9f9f9 60px 72px,#f9f9f9 72px 84px,#f9f9f9 84px 96px,#f9f9f9 96px 108px,#f9f9f9 108px 120px)"></div>
<div class="m" style="left:540px;top:324px;width:120px;height:12px;background:linear-gradient(90deg,#e7e7e7 0px 12px,#e9e9e9 12px 24px,#ececec 24px 36px,#efefef 36px 48px,#eeeeee 48px 60px,#eeeeee 60px 72px,#ececec 72px 84px,#eaeaea 84px 96px,#ebebeb 96px 108px,#ececec 108px 120px);clip-path:polygon(0.0px 0.0px,120.0px 0.0px,120.0px 9.0px,46.0px 12.0px,0.0px 12.0px)"></div>
<div class="m" style="left:540px;top:348px;width:120px;height:12px;background:linear-gradient(90deg,#f8f8f8 0px 12px,#f9f9f9 12px 24px,#f9f9f9 24px 36px,#f8f8f8 36px 48px,#f9f9f9 48px 60px,#f9f9f9 60px 72px,#f9f9f9 72px 84px,#f7f7f7 84px 96px,#f9f9f9 96px 108px,#f9f9f9 108px 120px)"></div>
<div class="m" style="left:540px;top:360px;width:120px;height:12px;background:linear-gradient(90deg,#e3e3e3 0px 12px,#e6e6e6 12px 24px,#e9e9e9 24px 36px,#ededed 36px 48px,#ebebeb 48px 60px,#ececec 60px 72px,#e9e9e9 72px 84px,#e6e6e6 84px 96px,#e9e9e9 96px 108px,#eeeeee 108px 120px);clip-path:polygon(0.0px 0.0px,120.0px 0.0px,120.0px 12.0px,83.0px 12.0px,27.0px 4.0px,0.0px 4.0px)"></div>
<div class="m" style="left:540px;top:528px;width:120px;height:7px;background:linear-gradient(90deg,#f5f5f5 0px 12px,#f9f9f9 12px 24px,#f9f9f9 24px 36px,#f7f7f7 36px 48px,#f9f9f9 48px 60px,#f9f9f9 60px 72px,#f9f9f9 72px 84px,#f8f8f8 84px 96px,#f7f7f7 96px 108px,#f9f9f9 108px 120px)"></div>
<div class="m" style="left:204px;top:216px;width:120px;height:12px;background:linear-gradient(90deg,#dddddd 0px 12px,#dbdbdb 12px 24px,#dedede 24px 36px,#dfdfdf 36px 48px,#e8e8e8 48px 60px,#e7e7e7 60px 72px,#d7d7d7 72px 84px,#e0e0e0 84px 96px,#dedede 96px 108px,#dddddd 108px 120px)"></div>
<div class="m" style="left:204px;top:261px;width:32px;height:3px;background:linear-gradient(90deg,#dddddd 0px 12px,#dbdbdb 12px 24px,#dedede 24px 32px)"></div>
<div class="m" style="left:204px;top:276px;width:120px;height:12px;background:linear-gradient(90deg,#f9f9f9 0px 12px,#f9f9f9 12px 24px,#f9f9f9 24px 36px,#f9f9f9 36px 48px,#f9f9f9 48px 60px,#f9f9f9 60px 72px,#f9f9f9 72px 84px,#f9f9f9 84px 96px,#f9f9f9 96px 108px,#f9f9f9 108px 120px)"></div>
<div class="m" style="left:204px;top:288px;width:120px;height:12px;background:linear-gradient(90deg,#dddddd 0px 12px,#dbdbdb 12px 24px,#dedede 24px 36px,#dfdfdf 36px 48px,#e8e8e8 48px 60px,#e7e7e7 60px 72px,#d7d7d7 72px 84px,#e1e1e1 84px 96px,#e4e4e4 96px 108px,#dddddd 108px 120px);clip-path:polygon(0.0px 0.0px,25.0px 0.0px,120.0px 9.0px,120.0px 12.0px,0.0px 12.0px)"></div>
<div class="m" style="left:204px;top:348px;width:120px;height:12px;background:linear-gradient(90deg,#f9f9f9 0px 12px,#f9f9f9 12px 24px,#f9f9f9 24px 36px,#f6f6f6 36px 48px,#f9f9f9 48px 60px,#f9f9f9 60px 72px,#f9f9f9 72px 84px,#f9f9f9 84px 96px,#f9f9f9 96px 108px,#f9f9f9 108px 120px)"></div>
<div class="m" style="left:204px;top:360px;width:120px;height:12px;background:linear-gradient(90deg,#e2e2e2 0px 12px,#e0e0e0 12px 24px,#e0e0e0 24px 36px,#e8e8e8 36px 48px,#eaeaea 48px 60px,#ebebeb 60px 72px,#dbdbdb 72px 84px,#e3e3e3 84px 96px,#e8e8e8 96px 108px,#dfdfdf 108px 120px)"></div>
<div class="m" style="left:204px;top:420px;width:120px;height:12px;background:linear-gradient(90deg,#f7f7f7 0px 12px,#f8f8f8 12px 24px,#f9f9f9 24px 36px,#f5f5f5 36px 48px,#f9f9f9 48px 60px,#f9f9f9 60px 72px,#f7f7f7 72px 84px,#f9f9f9 84px 96px,#f9f9f9 96px 108px,#f6f6f6 108px 120px)"></div>
<div class="m" style="left:204px;top:432px;width:120px;height:12px;background:linear-gradient(90deg,#ebebeb 0px 12px,#e9e9e9 12px 24px,#e9e9e9 24px 36px,#efefef 36px 48px,#f1f1f1 48px 60px,#f2f2f2 60px 72px,#e7e7e7 72px 84px,#ececec 84px 96px,#ebebeb 96px 108px,#e7e7e7 108px 120px)"></div>
<div class="m" style="left:204px;top:458px;width:120px;height:10px;background:linear-gradient(90deg,#f7f7f7 0px 12px,#f8f8f8 12px 24px,#f9f9f9 24px 36px,#f5f5f5 36px 48px,#f9f9f9 48px 60px,#f9f9f9 60px 72px,#f7f7f7 72px 84px,#f9f9f9 84px 96px,#f8f8f8 96px 108px,#f6f6f6 108px 120px)"></div>
<div class="m" style="left:204px;top:468px;width:120px;height:12px;background:linear-gradient(90deg,#ebebeb 0px 12px,#e9e9e9 12px 24px,#e9e9e9 24px 36px,#efefef 36px 48px,#f1f1f1 48px 60px,#f2f2f2 60px 72px,#e7e7e7 72px 84px,#ededed 84px 96px,#f2f2f2 96px 108px,#e7e7e7 108px 120px)"></div>
<div class="m" style="left:228px;top:312px;width:96px;height:12px;background:linear-gradient(90deg,#f7f7f7 0px 12px,#f7f7f7 12px 24px,#f7f7f7 24px 36px,#f7f7f7 36px 48px,#f7f7f7 48px 60px,#f7f7f7 60px 72px,#f7f7f7 72px 84px,#f7f7f7 84px 96px);clip-path:polygon(55.0px 0.0px,96.0px 0.0px,96.0px 20.0px,63.0px 15.0px,60.0px 6.0px)"></div>
<div class="m" style="left:228px;top:324px;width:96px;height:8px;background:linear-gradient(90deg,#f7f7f7 0px 12px,#f7f7f7 12px 24px,#f7f7f7 24px 36px,#f7f7f7 36px 48px,#f7f7f7 48px 60px,#f7f7f7 60px 72px,#f7f7f7 72px 84px,#f7f7f7 84px 96px);clip-path:polygon(55.0px -12.0px,96.0px -12.0px,96.0px 8.0px,63.0px 3.0px,60.0px -6.0px)"></div>
<div class="m" style="left:204px;top:384px;width:120px;height:12px;background:linear-gradient(90deg,#f7f7f7 0px 12px,#f7f7f7 12px 24px,#f7f7f7 24px 36px,#f7f7f7 36px 48px,#f7f7f7 48px 60px,#f7f7f7 60px 72px,#f7f7f7 72px 84px,#f7f7f7 84px 96px,#f7f7f7 96px 108px,#f7f7f7 108px 120px);clip-path:polygon(0.0px 0.0px,120.0px 0.0px,120.0px 17.0px,0.0px 7.0px)"></div>
<div class="m" style="left:204px;top:396px;width:120px;height:5px;background:linear-gradient(90deg,#f7f7f7 0px 12px,#f7f7f7 12px 24px,#f7f7f7 24px 36px,#f7f7f7 36px 48px,#f7f7f7 48px 60px,#f7f7f7 60px 72px,#f7f7f7 72px 84px,#f7f7f7 84px 96px,#f7f7f7 96px 108px,#f7f7f7 108px 120px);clip-path:polygon(0.0px -12.0px,120.0px -12.0px,120.0px 5.0px,0.0px -5.0px)"></div>
<div class="m" style="left:108px;top:384px;width:48px;height:5px;background:linear-gradient(90deg,#f7f7f7 0px 12px,#f7f7f7 12px 24px,#f7f7f7 24px 36px,#f7f7f7 36px 48px);clip-path:polygon(0.0px 0.0px,48.0px 0.0px,48.0px 5.0px,22.0px 2.0px,0.0px 1.0px)"></div>
<div class="m" style="left:122px;top:204px;width:34px;height:12px;background:linear-gradient(90deg,#f9f9f9 0px 10px,#f9f9f9 10px 22px,#f9f9f9 22px 34px)"></div>
<div class="m" style="left:122px;top:216px;width:34px;height:12px;background:linear-gradient(90deg,#cfcfcf 0px 10px,#cbcbcb 10px 22px,#dcdcdc 22px 34px)"></div>
<div class="m" style="left:108px;top:259px;width:48px;height:5px;background:linear-gradient(90deg,#e9e9e9 0px 12px,#d2d2d2 12px 24px,#d2d2d2 24px 36px,#e1e1e1 36px 48px)"></div>
<div class="m" style="left:108px;top:276px;width:48px;height:9px;background:linear-gradient(90deg,#f7f7f7 0px 12px,#f9f9f9 12px 24px,#f7f7f7 24px 36px,#f9f9f9 36px 48px)"></div>
<div class="m" style="left:132px;top:288px;width:24px;height:7px;background:linear-gradient(90deg,#d2d2d2 0px 12px,#e1e1e1 12px 24px);clip-path:polygon(0.0px 0.0px,24.0px 0.0px,24.0px 8.0px,0.0px 6.0px)"></div>
<div class="m" style="left:108px;top:348px;width:48px;height:12px;background:linear-gradient(90deg,#f7f7f7 0px 12px,#f5f5f5 12px 24px,#f4f4f4 24px 36px,#f8f8f8 36px 48px)"></div>
<div class="m" style="left:108px;top:360px;width:48px;height:12px;background:linear-gradient(90deg,#e9e9e9 0px 12px,#d8d8d8 12px 24px,#d5d5d5 24px 36px,#e3e3e3 36px 48px)"></div>
<div class="m" style="left:108px;top:420px;width:48px;height:12px;background:linear-gradient(90deg,#f6f6f6 0px 12px,#f1f1f1 12px 24px,#f0f0f0 24px 36px,#f3f3f3 36px 48px)"></div>
<div class="m" style="left:108px;top:432px;width:48px;height:8px;background:linear-gradient(90deg,#e9e9e9 0px 12px,#dbdbdb 12px 24px,#dadada 24px 36px,#e7e7e7 36px 48px)"></div>
<div class="c d" style="left:205px;top:283px;width:130px;clip-path:polygon(24.0px 0.0px,122.0px 0.0px,122.0px 14.0px,24.0px 5.0px)">2024-07-12 13:57:21</div>
<div class="c d" style="left:539px;top:283px;width:130px;clip-path:polygon(21.0px 0.0px,124.0px 0.0px,124.0px 11.5px,21.0px 4.5px)">2024-07-12 13:52:15</div>
<div class="c d" style="left:539px;top:318px;width:130px;clip-path:polygon(0.0px 7.5px,124.0px 7.5px,124.0px 13.5px,0.0px 11.5px)">2024-07-12 13:54:25</div>
<div class="c d" style="left:539px;top:354px;width:130px;clip-path:polygon(0.0px 0.0px,45.0px 0.0px,45.0px 12.0px,30.0px 10.0px,28.0px 20.0px,0.0px 20.0px)">2024-07-12 13:55:12</div>
<div class="c d" style="left:1229px;top:318px;width:130px;clip-path:polygon(55.0px 0.0px,112.0px 0.0px,112.0px 10.5px,55.0px 6.5px)">20240712 1282065</div>
<div class="c" style="left:872px;top:461px;width:60px;clip-path:polygon(13.0px 7.5px,52.0px 7.5px,52.0px 12.5px,13.0px 13.0px)">停车超时</div>
<div class="c" style="left:31px;top:577px">显示第 1 到第 10 条记录，总共 52 条记录</div>
<div class="c" style="left:282px;top:577px">每页显示</div>
<div class="abs" style="left:337px;top:571px;width:54px;height:34px;border:1px solid #ddd;border-radius:3px;background:#fff;font-size:13px;line-height:32px;padding-left:13px;color:#676a6c">10<svg class="abs" style="left:32px;top:14px" width="8" height="4" viewBox="0 0 8 4"><path d="M0 4H8L4 0Z" fill="#676a6c"/></svg></div>
<div class="c" style="left:395px;top:577px">条记录</div>
<div class="pg" style="left:1476px;width:26px;border-left:1px solid #ddd;border-radius:4px 0 0 4px;">‹</div>
<div class="pg" style="left:1502px;width:28px;background:#f4f4f4;">1</div>
<div class="pg" style="left:1530px;width:28px;">2</div>
<div class="pg" style="left:1558px;width:28px;">3</div>
<div class="pg" style="left:1586px;width:28px;">4</div>
<div class="pg" style="left:1614px;width:28px;">5</div>
<div class="pg" style="left:1642px;width:28px;">6</div>
<div class="pg" style="left:1670px;width:25px;border-radius:0 4px 4px 0;">›</div>
</body>
</html>
